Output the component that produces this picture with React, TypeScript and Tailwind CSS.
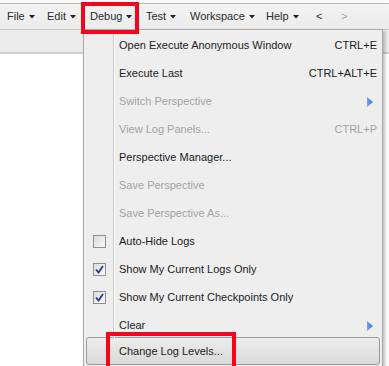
import React from 'react'

const font = { fontFamily: '"Liberation Sans", Arial, sans-serif' }

function Caret() {
    return (
        <svg width="6" height="4" viewBox="0 0 6 4" className="ml-[4px] mt-[1px]">
            <path d="M0 0 H6 L3 3.5 Z" fill="#222" />
        </svg>
    )
}

function MenuBarItem({ label, w, caret = true, muted }: any) {
    return (
        <div className={`flex items-center shrink-0 ${w} ${muted ? 'text-[#a0a0a0]' : ''}`}>
            <span>{label}</span>
            {caret && <Caret />}
        </div>
    )
}

function Check({ checked }: any) {
    return (
        <div className="w-[13px] h-[13px] border border-[#8f8f8f] bg-gradient-to-br from-[#dcdcdc] to-[#fafafa] flex items-center justify-center">
            {checked && (
                <svg width="9" height="9" viewBox="0 0 9 9">
                    <path d="M1 4.5 L3.5 7.5 L8 1" stroke="#283a8c" strokeWidth="1.8" fill="none" />
                </svg>
            )}
        </div>
    )
}

function SubArrow() {
    return (
        <svg width="6" height="10" viewBox="0 0 6 10">
            <defs>
                <linearGradient id="ar" x1="0" y1="0" x2="1" y2="0">
                    <stop offset="0" stopColor="#7aa6ea" />
                    <stop offset="1" stopColor="#2f6fd0" />
                </linearGradient>
            </defs>
            <path d="M0 0 L6 5 L0 10 Z" fill="url(#ar)" />
        </svg>
    )
}

function MenuRow({ label, shortcut, disabled, sub, check }: any) {
    return (
        <div className="flex h-[28px] items-center">
            <div className="w-[29px] h-full flex items-center justify-center pl-[1px]">
                {check !== undefined && <Check checked={check} />}
            </div>
            <div className="w-[2px] h-full border-l border-[#cdcdcd] bg-white/70" />
            <div className={`flex-1 flex items-center justify-between pl-[4px] pr-[5px] ${disabled ? 'text-[#a3a3a3]' : 'text-[#1c1c1c]'}`}>
                <span>{label}</span>
                {shortcut && <span>{shortcut}</span>}
                {sub && <span className="pr-[4px] pt-[1px]"><SubArrow /></span>}
            </div>
        </div>
    )
}

export default function App() {
    return (
        <div className="relative w-[389px] h-[366px] overflow-hidden bg-white text-[11px]" style={font}>
            <div className="h-[3px] bg-[#fafafa]" />
            <div className="h-[26px] border-t border-[#b9b9b9] bg-gradient-to-b from-[#f3f3f3] to-[#ececec] flex items-center pl-[7px] text-[#2b2b2b]">
                <MenuBarItem label="File" w="w-[40px]" />
                <MenuBarItem label="Edit" w="w-[43px]" />
                <MenuBarItem label="Debug" w="w-[56px]" />
                <MenuBarItem label="Test" w="w-[44px]" />
                <MenuBarItem label="Workspace" w="w-[76px]" />
                <MenuBarItem label="Help" w="w-[50px]" />
                <MenuBarItem label="<" w="w-[25px]" caret={false} />
                <MenuBarItem label=">" w="w-[20px]" caret={false} muted />
            </div>
            <div className="h-[25px] border-t border-[#c9c9c9] border-b-2 border-b-[#cfcfcf] bg-[#ececec]" />

            <div className="absolute left-[83px] top-[29px] w-[300px] h-[345px] bg-[#eeeeee] border border-[#a9a9a9] shadow-[2px_2px_3px_rgba(0,0,0,0.25)] pt-[1px]">
                <MenuRow label="Open Execute Anonymous Window" shortcut="CTRL+E" />
                <MenuRow label="Execute Last" shortcut="CTRL+ALT+E" />
                <MenuRow label="Switch Perspective" disabled sub />
                <MenuRow label="View Log Panels..." shortcut="CTRL+P" disabled />
                <MenuRow label="Perspective Manager..." />
                <MenuRow label="Save Perspective" disabled />
                <MenuRow label="Save Perspective As..." disabled />
                <MenuRow label="Auto-Hide Logs" check={false} />
                <MenuRow label="Show My Current Logs Only" check={true} />
                <MenuRow label="Show My Current Checkpoints Only" check={true} />
                <MenuRow label="Clear" sub />
                <div className="mx-[2px] mt-[-2px] h-[28px] rounded-[3px] border border-[#9c9c9c] bg-gradient-to-b from-[#ececec] to-[#dadada] flex items-center pl-[32px] text-[#1c1c1c]">
                    Change Log Levels...
                </div>
            </div>

            <div className="absolute left-[81px] top-[2px] w-[58px] h-[32px] border-4 border-[#f5041e]" />
            <div className="absolute left-[106px] top-[332px] w-[130px] h-[40px] border-4 border-[#f5041e]" />
        </div>
    )
}
